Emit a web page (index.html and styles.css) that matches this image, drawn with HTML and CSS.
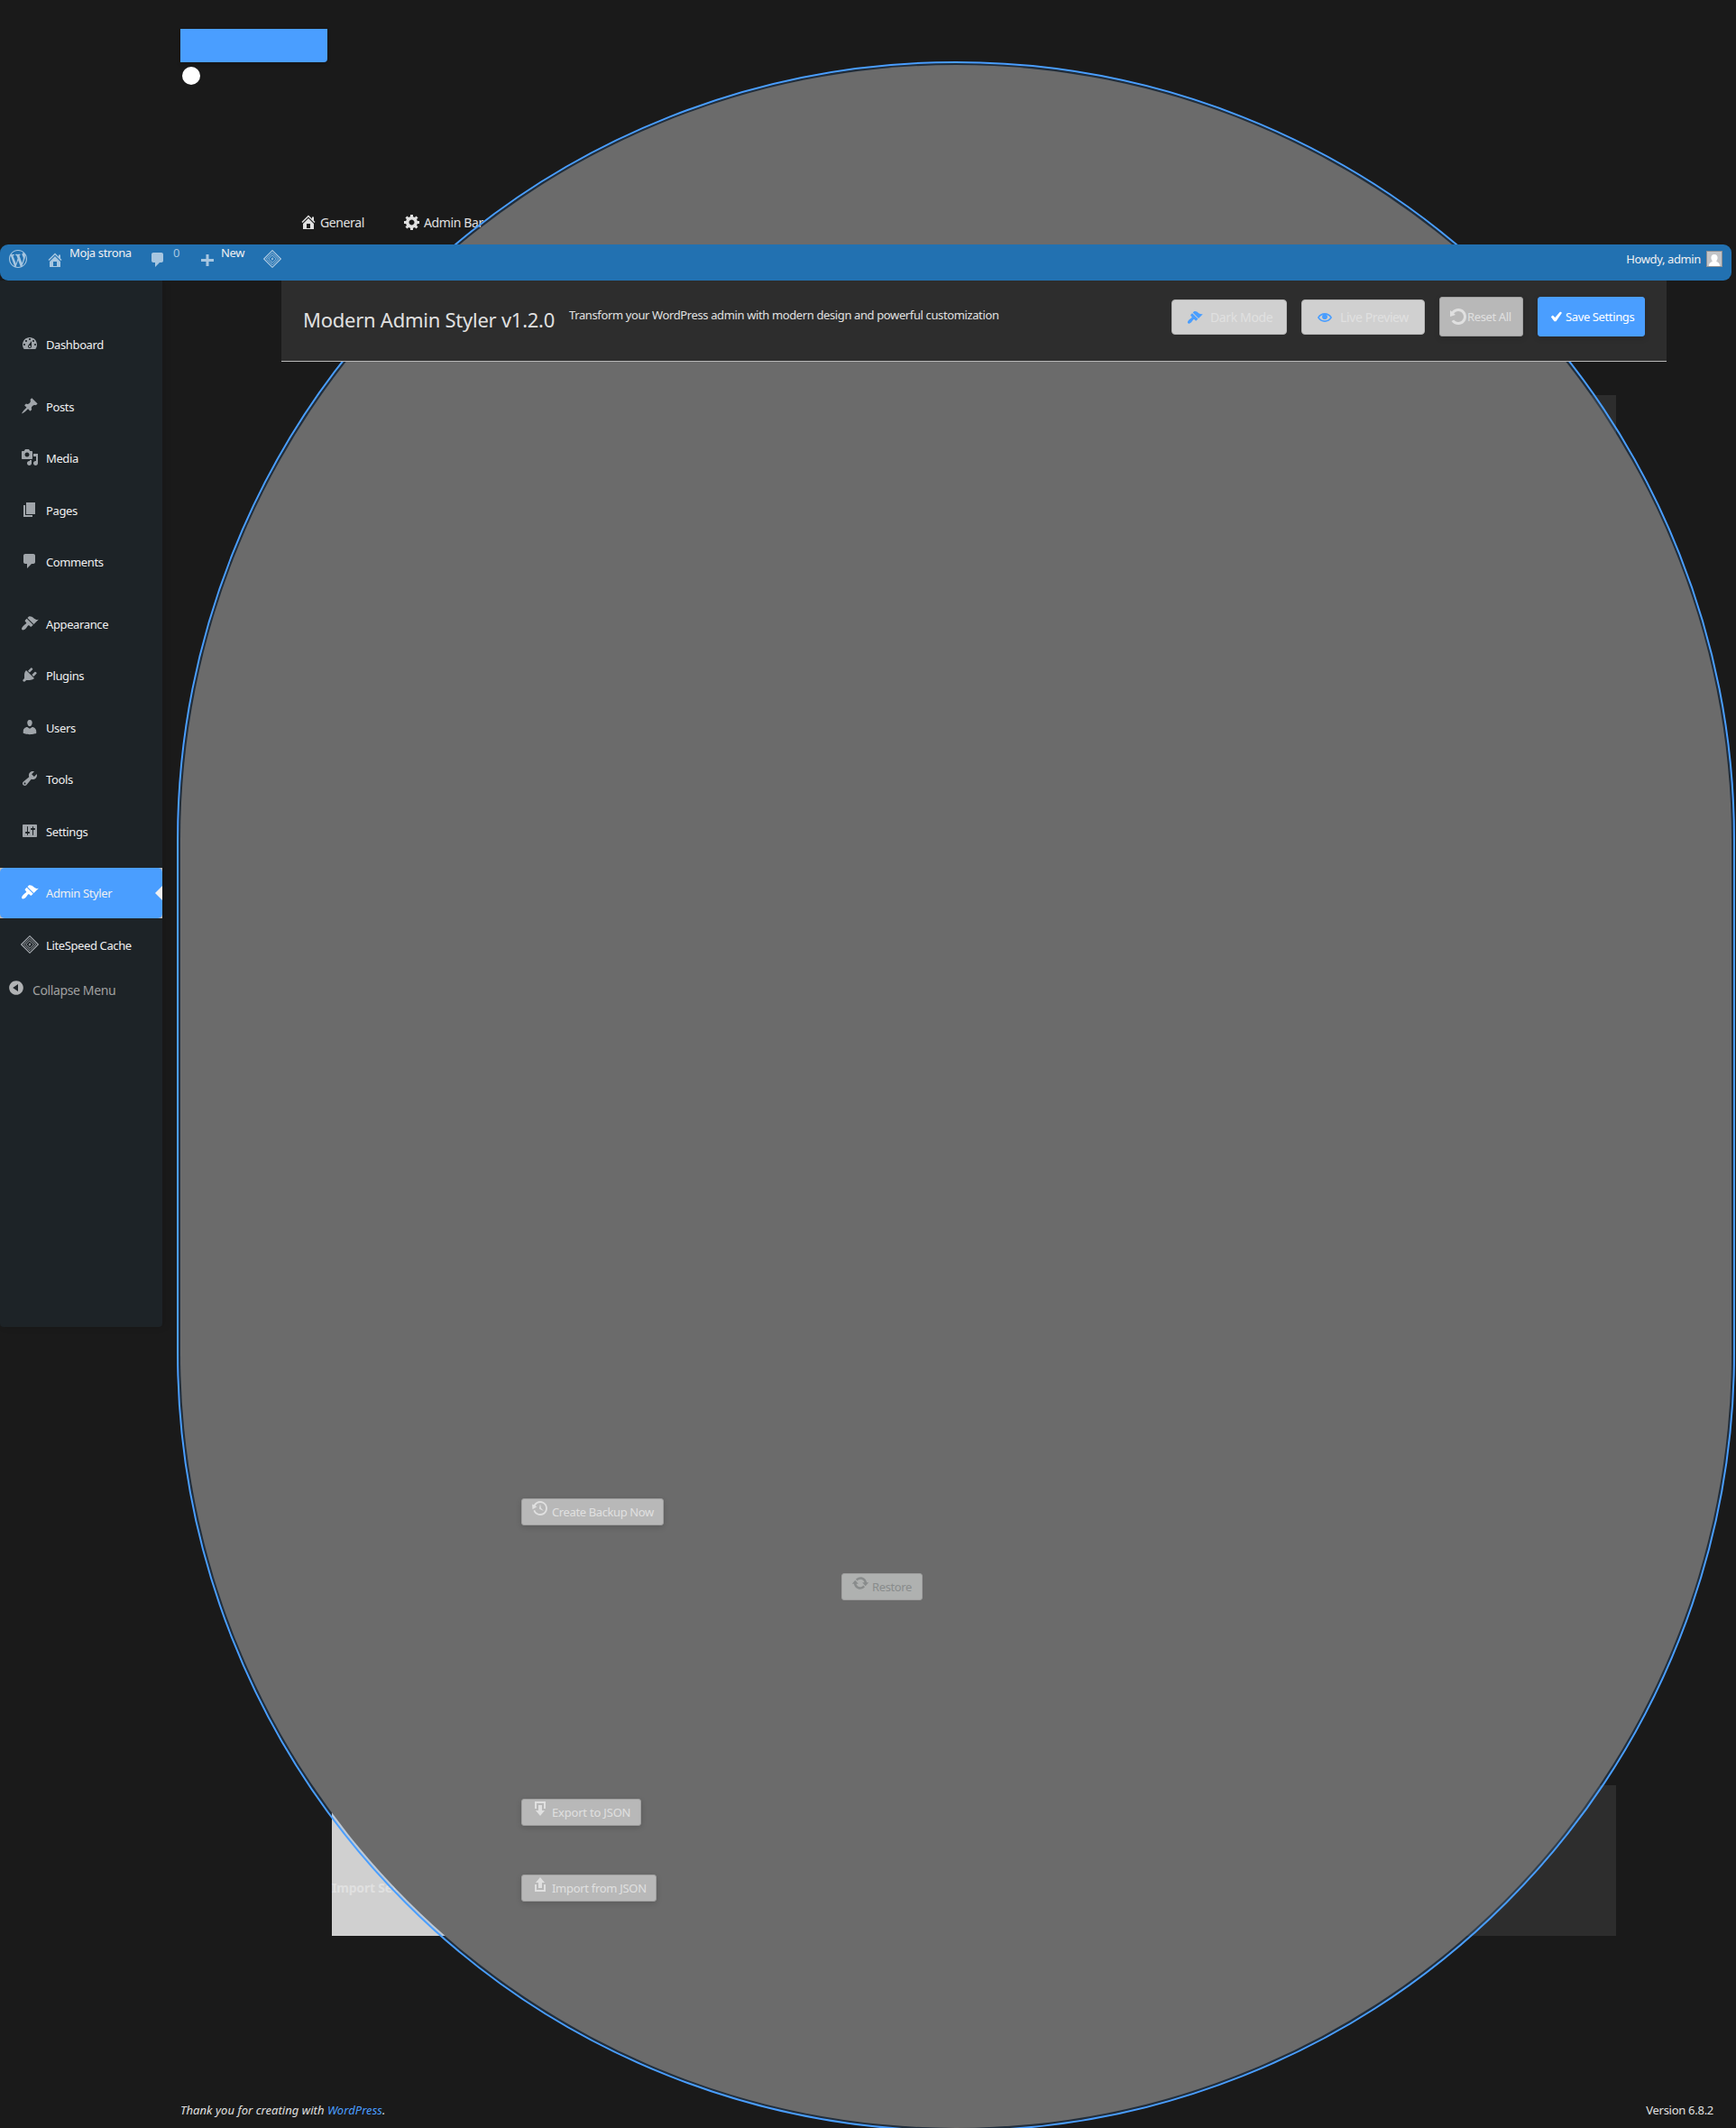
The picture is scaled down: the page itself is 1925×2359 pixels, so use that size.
FILE: index.html
```
<!DOCTYPE html>
<html lang="en">
<head>
<meta charset="utf-8">
<title>Modern Admin Styler</title>
<link rel="stylesheet" href="styles.css">
</head>
<body>
<svg class="defs" width="0" height="0">
  <defs>
    <symbol id="home" viewBox="0 0 20 20"><path d="M16 8.5l1.53 1.53-1.06 1.06L10 4.6l-6.47 6.49-1.06-1.06L10 2.5l4 4v-2h2v4zm-6-2.46l6 5.99V18H4v-5.97zM12 17v-5H8v5h4z"/></symbol>
    <symbol id="gear" viewBox="0 0 20 20"><path d="M18 12h-2.18c-.17.7-.44 1.35-.81 1.93l1.54 1.54-2.1 2.1-1.54-1.54c-.58.36-1.23.63-1.91.79V19H8v-2.18c-.68-.16-1.33-.43-1.91-.79l-1.54 1.54-2.12-2.12 1.54-1.54c-.36-.58-.63-1.23-.79-1.91H1V9.03h2.17c.16-.7.44-1.35.8-1.94L2.43 5.55l2.1-2.1 1.54 1.54c.58-.37 1.24-.64 1.93-.81V2h3v2.18c.68.16 1.33.43 1.91.79l1.54-1.54 2.12 2.12-1.54 1.54c.36.59.64 1.24.8 1.94H18V12zm-8.5 1.5c1.66 0 3-1.34 3-3s-1.34-3-3-3-3 1.34-3 3 1.34 3 3 3z"/></symbol>
    <symbol id="wp" viewBox="0 0 20 20"><path d="M20 10c0-5.51-4.49-10-10-10C4.48 0 0 4.49 0 10c0 5.52 4.48 10 10 10 5.51 0 10-4.48 10-10zM7.78 15.37L4.37 6.22c.55-.02 1.17-.08 1.17-.08.5-.06.44-1.13-.06-1.11 0 0-1.45.11-2.37.11-.18 0-.37 0-.58-.01C4.12 2.69 6.87 1.11 10 1.11c2.33 0 4.45.87 6.05 2.34-.68-.11-1.65.39-1.65 1.58 0 .74.45 1.36.9 2.1.35.61.55 1.36.55 2.46 0 1.49-1.4 5-1.4 5l-3.03-8.37c.54-.02.82-.17.82-.17.5-.05.44-1.25-.06-1.22 0 0-1.44.12-2.38.12-.87 0-2.33-.12-2.33-.12-.5-.03-.56 1.2-.06 1.22l.92.08 1.26 3.41zM17.41 10c.24-.64.74-1.87.43-4.25.7 1.29 1.05 2.71 1.05 4.25 0 3.29-1.73 6.24-4.4 7.78.97-2.59 1.94-5.2 2.92-7.78zM6.1 18.09C3.12 16.65 1.11 13.53 1.11 10c0-1.3.23-2.48.72-3.59C3.25 10.3 4.67 14.2 6.1 18.09zm4.03-6.63l2.58 6.98c-.86.29-1.76.45-2.71.45-.79 0-1.57-.11-2.29-.33.81-2.38 1.62-4.74 2.42-7.1z"/></symbol>
    <symbol id="comment" viewBox="0 0 20 20"><path d="M5 2h9c1.1 0 2 .9 2 2v7c0 1.1-.9 2-2 2h-2l-5 5v-5H5c-1.1 0-2-.9-2-2V4c0-1.1.9-2 2-2z"/></symbol>
    <symbol id="plus" viewBox="0 0 20 20"><path d="M17 9v3h-5.5v5h-3v-5H3V9h5.500V4h3v5z"/></symbol>
    <symbol id="lscache" viewBox="0 0 20 20"><path fill="none" stroke="currentColor" stroke-width="1.200" d="M10 .7l9.300 9.300-9.300 9.300L.7 10z"/><path fill="none" stroke="currentColor" stroke-width=".9" d="M10 3.300l6.700 6.700-6.700 6.700L3.300 10zM10 5.700l4.300 4.300-4.300 4.300L5.700 10z"/><path d="M11.100 7.200L8.400 10.200l1.400.5-.9 2.100 2.700-3-1.400-.5z"/></symbol>
    <symbol id="dash" viewBox="0 0 20 20"><path d="M3.760 16h12.480c1.100-1.370 1.760-3.110 1.760-5 0-4.420-3.580-8-8-8s-8 3.580-8 8c0 1.890.66 3.630 1.760 5zM10 4c.55 0 1 .45 1 1s-.45 1-1 1-1-.45-1-1 .45-1 1-1zM6 6c.55 0 1 .45 1 1s-.45 1-1 1-1-.45-1-1 .45-1 1-1zm8 0c.55 0 1 .45 1 1s-.45 1-1 1-1-.45-1-1 .45-1 1-1zm-5.370 5.550L12 7v6c0 1.100-.9 2-2 2s-2-.9-2-2c0-.57.24-1.080.63-1.450zM4 10c.55 0 1 .45 1 1s-.45 1-1 1-1-.45-1-1 .45-1 1-1zm12 0c.55 0 1 .45 1 1s-.45 1-1 1-1-.45-1-1 .45-1 1-1zm-5 3c0-.55-.45-1-1-1s-1 .45-1 1 .45 1 1 1 1-.45 1-1z"/></symbol>
    <symbol id="pin" viewBox="0 0 20 20"><path d="M10.440 3.020l1.820-1.820 6.360 6.350-1.830 1.820c-1.050-.68-2.480-.57-3.410.36l-.75.75c-.92.93-1.040 2.350-.35 3.410l-1.830 1.820-2.410-2.410-2.800 2.790c-.42.42-3.380 2.710-3.800 2.290s1.860-3.390 2.280-3.810l2.790-2.790L4.100 9.360l1.830-1.820c1.050.69 2.480.57 3.400-.36l.75-.75c.93-.92 1.050-2.350.36-3.410z"/></symbol>
    <symbol id="media" viewBox="0 0 20 20"><path d="M13 11V4c0-.55-.45-1-1-1h-1.670L9 1H5L3.670 3H2c-.55 0-1 .45-1 1v7c0 .55.45 1 1 1h10c.55 0 1-.45 1-1zM7 4.500c1.380 0 2.500 1.120 2.500 2.500S8.380 9.500 7 9.500 4.500 8.380 4.500 7 5.620 4.500 7 4.500zM14 6h5v10.500c0 1.380-1.120 2.500-2.500 2.500S14 17.880 14 16.500s1.120-2.500 2.500-2.500c.17 0 .34.02.5.05V9h-3V6zm-4 8.050V13h2v3.500c0 1.380-1.120 2.500-2.500 2.500S7 17.880 7 16.500 8.120 14 9.500 14c.17 0 .34.02.5.05z"/></symbol>
    <symbol id="page" viewBox="0 0 20 20"><path d="M6 15V2h10v13H6zm-1 1h8v2H3V5h2v11z"/></symbol>
    <symbol id="brush" viewBox="0 0 20 20"><path d="M14.480 11.060L7.410 3.990l1.500-1.500c.5-.56 2.300-.47 3.510.32 1.210.8 1.430 1.280 2.910 2.100 1.180.64 2.450 1.260 4.450.85zm-.71.71L6.700 4.700 4.930 6.470c-.39.39-.39 1.020 0 1.410l1.060 1.060c.39.39.39 1.030 0 1.420-.6.6-1.430 1.110-2.210 1.690-.35.26-.7.53-1.010.84C1.430 14.230.4 16.080 1.400 17.070c.99 1 2.840-.03 4.180-1.360.31-.31.58-.66.85-1.020.57-.78 1.080-1.610 1.690-2.210.39-.39 1.020-.39 1.410 0l1.060 1.060c.39.39 1.020.39 1.410 0z"/></symbol>
    <symbol id="plug" viewBox="0 0 20 20"><path d="M13.110 4.360L9.870 7.600 8 5.730l3.240-3.240c.35-.34 1.050-.2 1.560.32.52.51.66 1.210.31 1.550zm-8 1.770l.91-1.120 9.010 9.010-1.190.84c-.71.71-2.630 1.160-3.820 1.160H6.140L4.900 17.260c-.59.59-1.540.59-2.120 0-.59-.58-.59-1.530 0-2.120l1.240-1.240v-3.880c0-1.130.4-3.190 1.090-3.890zm7.260 3.970l3.240-3.240c.34-.35 1.040-.21 1.550.31.52.51.66 1.210.31 1.550l-3.240 3.250z"/></symbol>
    <symbol id="user" viewBox="0 0 20 20"><path d="M10 9.250c-2.270 0-2.730-3.440-2.730-3.440C7 4.020 7.820 2 9.970 2c2.160 0 2.980 2.020 2.710 3.810 0 0-.41 3.440-2.680 3.440zm0 2.570L12.720 10c2.390 0 4.520 2.330 4.520 4.530v2.490s-3.650 1.130-7.240 1.130c-3.650 0-7.240-1.130-7.240-1.130v-2.490c0-2.250 1.940-4.480 4.470-4.480z"/></symbol>
    <symbol id="wrench" viewBox="0 0 20 20"><path d="M16.680 9.770c-1.340 1.340-3.300 1.670-4.950.99l-5.410 6.520c-.99.99-2.590.99-3.580 0s-.99-2.590 0-3.570l6.520-5.420c-.68-1.650-.35-3.610.99-4.950 1.280-1.280 3.120-1.620 4.720-1.060l-2.890 2.890 2.820 2.820 2.860-2.870c.53 1.580.18 3.390-1.080 4.650zM3.810 16.210c.4.39 1.040.39 1.430 0 .4-.4.4-1.040 0-1.430-.39-.4-1.030-.4-1.430 0-.39.39-.39 1.030 0 1.430z"/></symbol>
    <symbol id="sliders" viewBox="0 0 20 20"><path d="M18 16V4c0-.55-.45-1-1-1H3c-.55 0-1 .45-1 1v12c0 .55.45 1 1 1h14c.55 0 1-.45 1-1zM8 11h1c.55 0 1 .45 1 1s-.45 1-1 1H8v1.500c0 .28-.22.5-.5.5s-.5-.22-.5-.5V13H6c-.55 0-1-.45-1-1s.45-1 1-1h1V5.500c0-.28.22-.5.5-.5s.5.22.5.5V11zm5-2h-1c-.55 0-1-.45-1-1s.45-1 1-1h1V5.500c0-.28.22-.5.5-.5s.5.22.5.5V7h1c.55 0 1 .45 1 1s-.45 1-1 1h-1v5.500c0 .28-.22.5-.5.5s-.5-.22-.5-.5V9z"/></symbol>
    <symbol id="collapse" viewBox="0 0 20 20"><path d="M10 2.160c4.330 0 7.840 3.510 7.840 7.840s-3.510 7.840-7.840 7.840S2.160 14.330 2.160 10 5.670 2.160 10 2.160zm2 11.720V6.120L6.180 9.970z"/></symbol>
    <symbol id="eye" viewBox="0 0 20 20"><path d="M19.700 9.400C17.700 6 14 3.900 10 3.900S2.300 6 .3 9.400L0 10l.3.6c2 3.400 5.700 5.500 9.700 5.500s7.700-2.100 9.700-5.500l.3-.6-.3-.6zM10 14.100c-3.100 0-6-1.600-7.700-4.100C3.600 8 5.700 6.600 8 6.100c-.9.6-1.500 1.700-1.500 2.900 0 1.900 1.600 3.500 3.500 3.500s3.500-1.600 3.500-3.500c0-1.200-.6-2.300-1.500-2.900 2.300.5 4.400 1.900 5.700 3.900-1.700 2.500-4.600 4.100-7.700 4.100z"/><circle cx="10" cy="9" r="3.300"/></symbol>
    <symbol id="check" viewBox="0 0 20 20"><path d="M15.600 3.900l2.200 1.500-7.300 10.400H8.300L4.200 10.200l2.300-2 2.800 2.900z"/></symbol>
    <symbol id="rotate" viewBox="0 0 20 20"><path d="M10.250 1.020c5.100 0 8.750 4.040 8.750 9s-3.650 9-8.750 9c-3.200 0-6.020-1.590-7.680-3.990l2.590-1.520c1.100 1.500 2.860 2.510 4.840 2.510 3.300 0 6-2.790 6-6s-2.700-6-6-6c-1.970 0-3.720 1-4.820 2.490L7 8.020l-6 2v-7L2.890 4.600c1.690-2.170 4.360-3.580 7.360-3.580z"/></symbol>
    <symbol id="backup" viewBox="0 0 20 20"><path d="M13.650 2.880c3.930 2.010 5.480 6.840 3.470 10.770s-6.830 5.480-10.770 3.470c-1.870-.96-3.200-2.560-3.860-4.400l1.640-1.030c.45 1.570 1.520 2.950 3.080 3.760 3.010 1.540 6.690.35 8.230-2.660 1.550-3.010.36-6.690-2.650-8.240C9.780 3.010 6.100 4.200 4.560 7.210l1.880.97-4.950 3.080-.39-5.820 1.780.91C4.900 2.400 9.750.89 13.650 2.880zm-4.360 7.830C9.110 10.530 9 10.280 9 10c0-.07.03-.12.04-.19h-.01L10 5l.97 4.810L14 13l-4.500-2.120.02-.02c-.08-.04-.16-.09-.23-.15z"/></symbol>
    <symbol id="update" viewBox="0 0 20 20"><path d="M10.200 3.280c3.530 0 6.430 2.610 6.920 6h2.080l-3.500 4-3.500-4h2.320c-.45-1.970-2.210-3.450-4.320-3.450-1.450 0-2.730.71-3.540 1.780L4.950 5.660C6.230 4.200 8.110 3.280 10.200 3.280zm-.4 13.440c-3.520 0-6.430-2.610-6.920-6H.8l3.500-4c1.170 1.330 2.330 2.670 3.500 4H5.480c.45 1.970 2.210 3.450 4.320 3.450 1.450 0 2.730-.71 3.540-1.780l1.710 1.950c-1.280 1.460-3.150 2.380-5.250 2.380z"/></symbol>
    <symbol id="download" viewBox="0 0 20 20"><path d="M14.010 4v6h2V2H4v8h2.010V4h8zm-2 2v6h3l-5 6-5-6h3V6h4z"/></symbol>
    <symbol id="upload" viewBox="0 0 20 20"><path d="M8 14V8H5l5-6 5 6h-3v6H8zm-2 2v-6H4v8h12.010v-8H14v6H6z"/></symbol>
  </defs>
</svg>

<div class="thumb"></div>

<div class="top">
  <div class="chip"></div>
  <div class="dot"></div>
  <nav class="tabs">
    <a class="tab"><svg class="ico"><use href="#home"/></svg>General</a>
    <a class="tab tab-bar"><svg class="ico"><use href="#gear"/></svg>Admin Bar</a>
  </nav>
</div>

<header class="adminbar">
  <svg class="ico ab-wp"><use href="#wp"/></svg>
  <svg class="ico ab-home"><use href="#home"/></svg><span class="ab-text ab-site">Moja strona</span>
  <svg class="ico ab-comment"><use href="#comment"/></svg><span class="ab-text ab-count">0</span>
  <svg class="ico ab-plus"><use href="#plus"/></svg><span class="ab-text ab-new">New</span>
  <svg class="ico ab-ls"><use href="#lscache"/></svg>
  <span class="howdy">Howdy, admin</span>
  <svg class="avatar" viewBox="0 0 18 18"><path fill="#8c8f94" d="M0 0h18v18H0z"/><path fill="#c3c4c7" d="M1 1h16v16H1z"/><path fill="#fff" d="M9 4c2.300 0 3.600 1.600 3.600 3.800 0 1.600-.7 2.800-1.500 3.500.3 1.200 3.900 1.300 3.900 5.700H3c0-4.400 3.600-4.500 3.900-5.700-.8-.7-1.500-1.900-1.500-3.500C5.400 5.600 6.700 4 9 4z"/></svg>
</header>

<div class="layout">
  <aside class="sidebar">
    <ul class="menu">
      <li class="item gap"><svg class="ico"><use href="#dash"/></svg>Dashboard</li>
      <li class="item"><svg class="ico"><use href="#pin"/></svg>Posts</li>
      <li class="item"><svg class="ico"><use href="#media"/></svg>Media</li>
      <li class="item"><svg class="ico"><use href="#page"/></svg>Pages</li>
      <li class="item gap"><svg class="ico"><use href="#comment"/></svg>Comments</li>
      <li class="item"><svg class="ico"><use href="#brush"/></svg>Appearance</li>
      <li class="item"><svg class="ico"><use href="#plug"/></svg>Plugins</li>
      <li class="item"><svg class="ico"><use href="#user"/></svg>Users</li>
      <li class="item"><svg class="ico"><use href="#wrench"/></svg>Tools</li>
      <li class="item gap"><svg class="ico"><use href="#sliders"/></svg>Settings</li>
      <li class="current"><div class="item"><svg class="ico"><use href="#brush"/></svg>Admin Styler<i class="arrow"></i></div></li>
      <li class="item"><svg class="ico"><use href="#lscache"/></svg>LiteSpeed Cache</li>
    </ul>
    <div class="collapse"><svg class="ico"><use href="#collapse"/></svg>Collapse Menu</div>
  </aside>

  <main class="main">
    <section class="head">
      <h1 class="title">Modern Admin Styler v1.2.0</h1>
      <p class="sub">Transform your WordPress admin with modern design and powerful customization</p>
      <div class="actions">
        <label class="toggle t-dark"><svg class="ico"><use href="#brush"/></svg>Dark Mode</label>
        <label class="toggle t-live"><svg class="ico"><use href="#eye"/></svg>Live Preview</label>
        <button class="reset"><svg class="ico"><use href="#rotate"/></svg>Reset All</button>
        <button class="save"><svg class="ico"><use href="#check"/></svg>Save Settings</button>
      </div>
    </section>
    <section class="card card-first"></section>
    <section class="backups">
      <button class="btn b-create"><svg class="ico"><use href="#backup"/></svg><span>Create Backup Now</span></button>
      <button class="btn b-restore"><svg class="ico"><use href="#update"/></svg><span>Restore</span></button>
    </section>
    <section class="card transfer">
      <div class="th">Import Settings</div>
      <div class="td">
        <button class="btn b-export"><svg class="ico"><use href="#download"/></svg><span>Export to JSON</span></button>
        <button class="btn b-import"><svg class="ico"><use href="#upload"/></svg><span>Import from JSON</span></button>
      </div>
    </section>
  </main>
</div>

<footer class="footer">
  <em>Thank you for creating with <a class="link">WordPress</a>.</em>
  <span class="version">Version 6.8.2</span>
</footer>
</body>
</html>
```
FILE: styles.css
```
* { box-sizing: border-box; }
body {
  margin: 0;
  width: 1925px;
  height: 2359px;
  overflow: hidden;
  position: relative;
  display: flex;
  flex-direction: column;
  background: #1a1a1a;
  color: #e0e0e0;
  font: 13px/18px "Noto Sans", sans-serif;
  letter-spacing: -.38px;
}
.defs { position: absolute; }
.ico { width: 20px; height: 20px; fill: currentColor; flex: none; display: block; }
button { font: inherit; letter-spacing: inherit; color: inherit; margin: 0; }

/* oversized slider thumb lying over the page */
.thumb {
  position: absolute;
  left: 200px;
  top: 72px;
  width: 1720px;
  height: 2287px;
  border-radius: 860px;
  background: #6b6b6b;
  outline: 2px solid #4a9eff;
  outline-offset: 2px;
  box-shadow: 0 0 0 2px rgba(74, 158, 255, .15);
  z-index: 1;
}

.top { height: 271px; padding: 32px 0 0 200px; flex: none; }
.chip { width: 163px; height: 37px; background: #4a9eff; border-radius: 0 0 4px 0; box-shadow: 0 2px 4px rgba(0, 0, 0, .2); }
.dot { width: 20px; height: 20px; margin: 5px 0 0 2px; border-radius: 50%; background: #fff; }
.tabs { display: flex; margin: 142px 0 0 132px; font-size: 14px; line-height: 22px; }
.tab { display: flex; gap: 3px; }
.tab-bar { margin-left: 43px; }

.adminbar {
  position: relative;
  z-index: 2;
  width: 1920px;
  height: 40px;
  flex: none;
  display: flex;
  align-items: flex-start;
  padding: 6px 10px;
  border-radius: 9px;
  background: #2271b1;
  color: #a7c6e0;
}
.ab-home { margin: 1px 0 0 21px; }
.ab-text { color: #f0f0f1; margin-top: -6px; white-space: nowrap; }
.ab-site { margin-left: 6px; width: 68px; }
.ab-comment { margin: 1px 0 0 20px; }
.ab-count { margin-left: 7px; width: 8px; color: #a7c6e0; }
.ab-plus { margin: 1px 0 0 20px; }
.ab-new { margin-left: 5px; width: 27px; }
.ab-ls { margin-left: 20px; }
.howdy { color: #f0f0f1; margin: 1px 6px 0 auto; }
.avatar { width: 18px; height: 18px; margin-top: 1px; }

.layout { display: flex; height: 1980px; flex: none; }
.sidebar {
  width: 180px;
  height: 1160px;
  padding-top: 43px;
  background: #1d2327;
  border-radius: 0 0 4px 4px;
  box-shadow: 2px 0 8px rgba(0, 0, 0, .12);
  color: #f0f0f1;
}
.menu { margin: 0; padding: 0; list-style: none; }
.item { display: flex; align-items: center; gap: 8px; height: 56px; margin-bottom: 1.4px; padding-left: 23px; }
.item .ico { color: #a0a5aa; margin-top: -2px; }
.gap { margin-bottom: 12.9px; }
.current { height: 56px; background: #b8b8b8; margin-bottom: 1.4px; }
.current .item { background: #4a9eff; border-radius: 5px; margin: 0; }
.current .ico { color: #fff; }
.arrow { margin-left: auto; border: 8px solid transparent; border-left: 0; border-right-color: #f0f0f1; }
.collapse { display: flex; gap: 8px; padding-left: 8px; margin-top: 9px; line-height: 25px; font-size: 14px; color: #a0a0a0; }
.collapse .ico { color: #b0b2b4; }

.main { width: 1536px; margin-left: 132px; }
.head {
  position: relative;
  z-index: 2;
  display: flex;
  height: 90px;
  padding: 0 24px;
  background: #2d2d2d;
  border-bottom: 1px solid #b8b8b8;
}
.title { margin: 28px 16px 0 0; font-size: 22px; line-height: 30px; font-weight: 400; letter-spacing: -.25px; width: 279px; white-space: nowrap; }
.sub { margin: 29px 0 0; font-size: 13px; white-space: nowrap; }
.actions { margin: 18px 0 0 auto; display: flex; gap: 16px; align-items: flex-start; }
.toggle {
  display: flex; align-items: center; gap: 8px;
  height: 39px; margin-top: 3px; padding-left: 16px;
  background: #d0d0d0; border: 1px solid #b8b8b8; border-radius: 4px;
  font-size: 14px; white-space: nowrap;
}
.toggle .ico { width: 18px; height: 18px; color: #4a9eff; }
.t-dark { width: 128px; }
.t-live { width: 137px; }
.t-live .ico { width: 16px; margin: 0 1px; }
.reset, .save {
  display: flex; align-items: center; height: 44px; padding: 0 0 0 10px;
  border: 1px solid #a0a0a0; border-radius: 3px; background: #b8b8b8; white-space: nowrap;
  box-shadow: 0 2px 6px rgba(0, 0, 0, .15);
}
.reset { width: 93px; }
.save { width: 119px; border-color: #4a9eff; background: #4a9eff; color: #fff; }
.save .ico { width: 18px; margin-right: 2px; }

.card { width: 1424px; margin-left: 56px; background: #2d2d2d; }
.card-first { height: 600px; margin-top: 37px; }
.backups { height: 941px; padding: 623px 0 0 266px; display: flex; align-items: flex-start; }
.btn {
  position: relative; z-index: 2;
  display: flex; gap: 3px; height: 30px; padding: 0 0 0 10px;
  border: 1px solid #a0a0a0; border-radius: 3px;
  background: #b8b8b8; color: #e0e0e0; line-height: 28px; white-space: nowrap;
  box-shadow: 0 2px 6px rgba(0, 0, 0, .15);
}
.b-create { width: 158px; }
.b-restore { width: 90px; margin: 83px 0 0 197px; background: #afb1b0; color: #898c8c; box-shadow: none; }
.b-export { width: 133px; letter-spacing: -.2px; }
.b-import { width: 150px; letter-spacing: -.3px; }
.transfer { display: flex; height: 167px; }
.th { width: 200px; height: 141px; margin-top: 26px; padding-top: 78px; background: #d0d0d0; font-size: 14px; font-weight: 700; line-height: 20px; letter-spacing: -.2px; }
.td { padding: 15px 0 0 10px; display: flex; flex-direction: column; gap: 54px; }

.footer { flex: none; height: 68px; padding: 39px 25px 0 200px; display: flex; justify-content: space-between; }
.footer em { letter-spacing: .04px; }
.version { letter-spacing: -.28px; }
.link { color: #4a9eff; }
```
